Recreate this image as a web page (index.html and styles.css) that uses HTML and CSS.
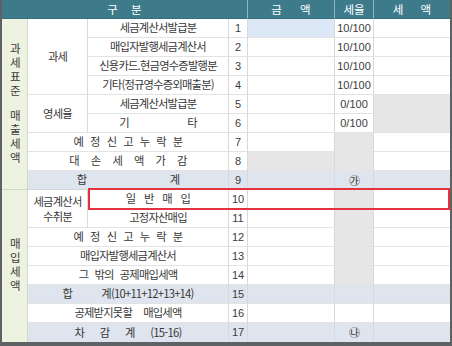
FILE: index.html
```html
<!DOCTYPE html>
<html lang="ko">
<head>
<meta charset="utf-8">
<link rel="stylesheet" href="styles.css">
</head>
<body>
<div class="frame">
  <div class="grid">
    <div class="hd c4"><span class="ws-hd1">구 분</span></div>
    <div class="hd"><span class="ws-hd2">금 액</span></div>
    <div class="hd">세율</div>
    <div class="hd last"><span class="ws-hd3">세 액</span></div>

    <!-- row 1 -->
    <div class="side r9"><span class="vt">과세표준</span><span class="vt">매출세액</span></div>
    <div class="cell r4">과세</div>
    <div class="cell">세금계산서발급분</div>
    <div class="cell num">1</div>
    <div class="cell sel"></div>
    <div class="cell num">10/100</div>
    <div class="cell last"></div>
    <!-- row 2 -->
    <div class="cell">매입자발행세금계산서</div>
    <div class="cell num">2</div>
    <div class="cell"></div>
    <div class="cell num">10/100</div>
    <div class="cell last"></div>
    <!-- row 3 -->
    <div class="cell">신용카드.현금영수증발행분</div>
    <div class="cell num">3</div>
    <div class="cell"></div>
    <div class="cell num">10/100</div>
    <div class="cell last"></div>
    <!-- row 4 -->
    <div class="cell">기타(정규영수증외매출분)</div>
    <div class="cell num">4</div>
    <div class="cell"></div>
    <div class="cell num">10/100</div>
    <div class="cell last"></div>
    <!-- row 5 -->
    <div class="cell r2">영세율</div>
    <div class="cell">세금계산서발급분</div>
    <div class="cell num">5</div>
    <div class="cell"></div>
    <div class="cell num">0/100</div>
    <div class="cell last gray"></div>
    <!-- row 6 -->
    <div class="cell"><span class="ws-gita">기 타</span></div>
    <div class="cell num">6</div>
    <div class="cell"></div>
    <div class="cell num">0/100</div>
    <div class="cell last gray"></div>
    <!-- row 7 -->
    <div class="cell c2"><span class="ws-s">예 정 신 고 누 락 분</span></div>
    <div class="cell num">7</div>
    <div class="cell"></div>
    <div class="cell gray"></div>
    <div class="cell last"></div>
    <!-- row 8 -->
    <div class="cell c2"><span class="ws-m">대 손 세 액 가 감</span></div>
    <div class="cell num">8</div>
    <div class="cell gray"></div>
    <div class="cell gray"></div>
    <div class="cell last"></div>
    <!-- row 9 -->
    <div class="cell c2 blue grp"><span class="ws-sum">합 계</span></div>
    <div class="cell num blue grp">9</div>
    <div class="cell blue grp"></div>
    <div class="cell blue grp mark">㉮</div>
    <div class="cell last blue grp"></div>

    <!-- row 10 -->
    <div class="side r8"><span class="vt">매입세액</span></div>
    <div class="cell r2 two">세금계산서<br>수취분</div>
    <div class="cell"><span class="ws-il">일 반 매 입</span></div>
    <div class="cell num">10</div>
    <div class="cell"></div>
    <div class="cell gray"></div>
    <div class="cell last"></div>
    <!-- row 11 -->
    <div class="cell">고정자산매입</div>
    <div class="cell num">11</div>
    <div class="cell"></div>
    <div class="cell gray"></div>
    <div class="cell last"></div>
    <!-- row 12 -->
    <div class="cell c2"><span class="ws-s">예 정 신 고 누 락 분</span></div>
    <div class="cell num">12</div>
    <div class="cell"></div>
    <div class="cell gray"></div>
    <div class="cell last"></div>
    <!-- row 13 -->
    <div class="cell c2">매입자발행세금계산서</div>
    <div class="cell num">13</div>
    <div class="cell"></div>
    <div class="cell gray"></div>
    <div class="cell last"></div>
    <!-- row 14 -->
    <div class="cell c2"><span class="ws-t">그 밖의 공제매입세액</span></div>
    <div class="cell num">14</div>
    <div class="cell"></div>
    <div class="cell gray"></div>
    <div class="cell last"></div>
    <!-- row 15 -->
    <div class="cell c2 blue"><span class="ws-sum15">합 계(10+11+12+13+14)</span></div>
    <div class="cell num blue">15</div>
    <div class="cell blue"></div>
    <div class="cell blue"></div>
    <div class="cell last blue"></div>
    <!-- row 16 -->
    <div class="cell c2"><span class="ws-m2">공제받지못할 매입세액</span></div>
    <div class="cell num">16</div>
    <div class="cell"></div>
    <div class="cell"></div>
    <div class="cell last"></div>
    <!-- row 17 -->
    <div class="cell c2 blue end"><span class="ws-cha">차 감 계 (15-16)</span></div>
    <div class="cell num blue end">17</div>
    <div class="cell blue end"></div>
    <div class="cell blue end mark">㉯</div>
    <div class="cell last blue end"></div>
  </div>
  <div class="hl"></div>
</div>
</body>
</html>
```

FILE: styles.css
```css
html, body {
  margin: 0;
  padding: 0;
  background: #ffffff;
}

.frame {
  position: relative;
  width: 452px;
  height: 346px;
  box-sizing: border-box;
  border-left: 2px solid #5f6264;
  border-right: 2px solid #5f6264;
  border-bottom: 4px solid #5f6264;
  background: #ffffff;
  font-family: "Noto Sans CJK KR", "Noto Sans", sans-serif;
  font-size: 11.3px;
  letter-spacing: -0.8px;
  color: #383838;
}

.grid {
  display: grid;
  grid-template-columns: 26px 60px 141px 19px 87px 39px 76px;
  grid-template-rows: repeat(18, 19px);
}

.hd {
  background: #3d7b8b;
  color: #ffffff;
  display: flex;
  align-items: center;
  justify-content: center;
  box-sizing: border-box;
  border-right: 1px solid #8db6c0;
  border-bottom: 1px solid #35707f;
  font-size: 11.5px;
  letter-spacing: 0;
}

.hd.last { border-right: 0; }

.c4 { grid-column: span 4; }
.c2 { grid-column: span 2; }
.r9 { grid-row: span 9; }
.r8 { grid-row: span 8; }
.r4 { grid-row: span 4; }
.r2 { grid-row: span 2; }

.cell {
  display: flex;
  align-items: center;
  justify-content: center;
  box-sizing: border-box;
  border-right: 1px solid #d9d9d9;
  border-bottom: 1px solid #e3e3e3;
  white-space: nowrap;
  line-height: 1;
}

.cell.last { border-right: 0; }
.cell.end { border-bottom: 0; }

.side {
  background: #eef2e1;
  box-sizing: border-box;
  border-right: 1px solid #d3d8c6;
  border-bottom: 1px solid #d3d8c6;
  display: flex;
  flex-direction: column;
  align-items: center;
  justify-content: center;
  gap: 11px;
  font-size: 11.5px;
  color: #3a3a3a;
}

.side.r8 { border-bottom: 0; }

.vt {
  writing-mode: vertical-rl;
  text-orientation: upright;
  letter-spacing: 2.5px;
  line-height: 1;
}

.num {
  font-family: "Liberation Sans", Arial, sans-serif;
  font-size: 11px;
  letter-spacing: 0;
  color: #3c3c3c;
}

.mark {
  font-family: "Noto Sans CJK KR", sans-serif;
  font-size: 11px;
}

.two {
  line-height: 15px;
  text-align: center;
  padding-top: 1px;
}

.sel { background: #dce8f6; }
.gray { background: #e6e6e6; }
.blue { background: #dfe5ee; }
.grp { border-bottom-color: #cfd3da; }

.ws-hd1 { word-spacing: 10px; }
.ws-hd2 { word-spacing: 15px; }
.ws-hd3 { word-spacing: 14px; }
.ws-s { word-spacing: 4.6px; }
.ws-m { word-spacing: 9.6px; }
.ws-sum { word-spacing: 81px; }
.ws-il { word-spacing: 6.3px; }
.ws-gita { word-spacing: 56px; }
.ws-t { word-spacing: 3.8px; }
.ws-sum15 { word-spacing: 27px; }
.ws-m2 { word-spacing: 8.8px; }
.ws-cha { word-spacing: 13.3px; }

.hl {
  position: absolute;
  left: 86px;
  top: 188px;
  width: 362px;
  height: 22px;
  box-sizing: border-box;
  border: 2px solid #e4323e;
}
```
